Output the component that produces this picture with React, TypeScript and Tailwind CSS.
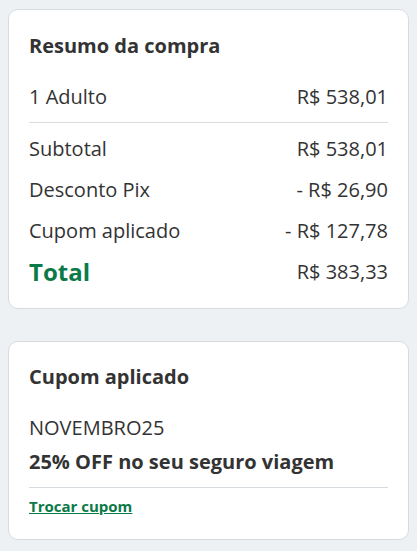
export default function App() {
  const rows = [
    { label: "Subtotal", value: "R$ 538,01" },
    { label: "Desconto Pix", value: "- R$ 26,90" },
    { label: "Cupom aplicado", value: "- R$ 127,78" },
  ];

  return (
    <div className="min-h-[551px] bg-[#eef1f4] px-2 pt-[9px] pb-3 text-[#333] font-['Open_Sans',sans-serif]">
      {/* Resumo */}
      <section className="rounded-[10px] border border-[#d7dce1] bg-white px-5 pt-5 pb-4">
        <h2 className="h-8 text-[20px] leading-8 font-bold">Resumo da compra</h2>
        <div className="mt-[14px] flex h-[41px] items-center justify-between text-[20px]">
          <span>1 Adulto</span>
          <span>R$ 538,01</span>
        </div>
        <div className="my-[5px] h-px bg-[#d7dce1]" />
        {rows.map((r) => (
          <div key={r.label} className="flex h-[41px] items-center justify-between text-[20px]">
            <span>{r.label}</span>
            <span>{r.value}</span>
          </div>
        ))}
        <div className="flex h-[41px] items-center justify-between">
          <span className="text-[24px] font-bold text-[#0b7a48]">Total</span>
          <span className="text-[20px]">R$ 383,33</span>
        </div>
      </section>

      {/* Cupom */}
      <section className="mt-8 rounded-[10px] border border-[#d7dce1] bg-white px-5 pt-5 pb-[21px]">
        <h2 className="h-[30px] text-[20px] leading-[30px] font-bold">Cupom aplicado</h2>
        <p className="mt-[19px] h-[34px] text-[20px] leading-[34px]">NOVEMBRO25</p>
        <p className="h-[34px] text-[20px] leading-[34px] font-bold">25% OFF no seu seguro viagem</p>
        <div className="mt-2 mb-[6px] h-px bg-[#d7dce1]" />
        <a href="#" className="block h-6 text-[15px] leading-6 font-bold text-[#0b7a48] underline">
          Trocar cupom
        </a>
      </section>
    </div>
  );
}
